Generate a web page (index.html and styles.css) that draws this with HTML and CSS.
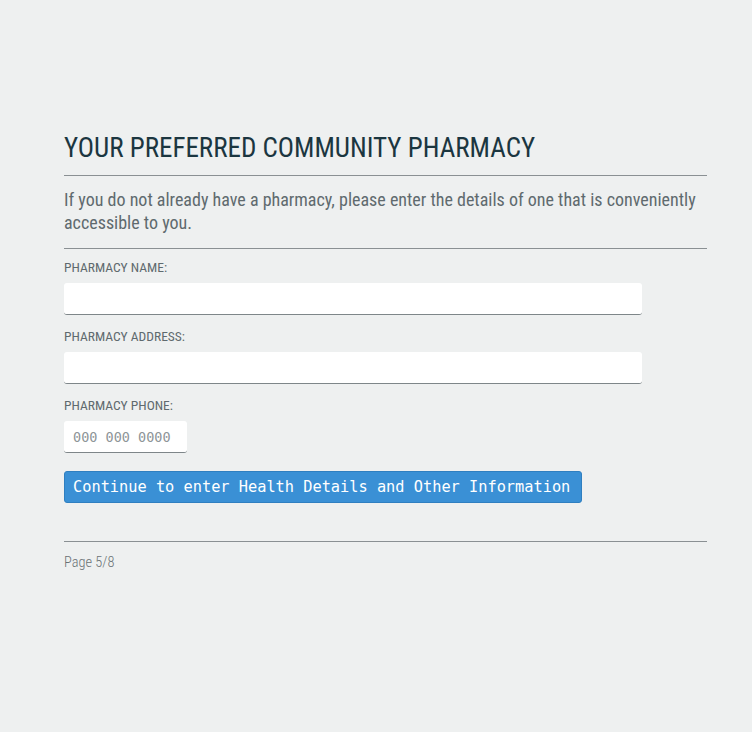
FILE: index.html
```html
<!DOCTYPE html>
<html>
<head>
<meta charset="utf-8">
<link rel="stylesheet" href="styles.css">
</head>
<body>
<main class="page">
  <h1 class="title">YOUR PREFERRED COMMUNITY PHARMACY</h1>
  <p class="intro">If you do not already have a pharmacy, please enter the details of one that is conveniently accessible to you.</p>
  <form class="form">
    <label class="field">
      <span class="label">PHARMACY NAME:</span>
      <input class="input wide" type="text">
    </label>
    <label class="field">
      <span class="label">PHARMACY ADDRESS:</span>
      <input class="input wide" type="text">
    </label>
    <label class="field">
      <span class="label">PHARMACY PHONE:</span>
      <input class="input phone" type="text" placeholder="000 000 0000">
    </label>
    <button class="btn" type="button">Continue to enter Health Details and Other Information</button>
  </form>
  <footer class="footer">Page 5/8</footer>
</main>
</body>
</html>
```

FILE: styles.css
```css
html, body {
  margin: 0;
  padding: 0;
  background: #eef0f0;
}
body {
  font-family: "Roboto Condensed", "Liberation Sans Narrow", Roboto, sans-serif;
  color: #5f6a6e;
}
.page {
  width: 643px;
  margin: 0 0 0 64px;
  padding-top: 130px;
}
.title {
  margin: 0;
  font-size: 27px;
  font-weight: 400;
  color: #1b3640;
  line-height: 36px;
  padding-bottom: 9px;
  border-bottom: 1px solid #8a9093;
}
.intro {
  margin: 0;
  padding: 12px 0 14px;
  font-size: 18px;
  line-height: 23px;
  color: #5f6a6e;
  border-bottom: 1px solid #8a9093;
}
.form {
  display: flex;
  flex-direction: column;
  align-items: flex-start;
  padding-top: 10px;
}
.field {
  display: flex;
  flex-direction: column;
  align-items: flex-start;
  gap: 8px;
  margin-bottom: 13px;
}
.label {
  font-size: 13.5px;
  line-height: 16px;
  color: #5f6a6e;
}
.input {
  box-sizing: border-box;
  height: 32px;
  border: none;
  border-bottom: 1px solid #7e8689;
  border-radius: 3px;
  background: #ffffff;
  padding: 0 9px;
  font-family: "DejaVu Sans Mono", monospace;
  font-size: 13.5px;
  outline: none;
}
.input.wide { width: 578px; }
.input.phone { width: 123px; }
.input::placeholder { color: #8e9598; }
.btn {
  margin-top: 5px;
  width: 518px;
  height: 32px;
  border: 1px solid #2f7fc0;
  border-radius: 3px;
  background: #3a90d5;
  color: #ffffff;
  font-family: "DejaVu Sans Mono", monospace;
  font-size: 15.3px;
  text-align: left;
  padding: 0 8px;
}
.footer {
  margin-top: 38px;
  border-top: 1px solid #8a9093;
  padding-top: 12px;
  font-size: 14.4px;
  font-weight: 300;
  color: #6a7275;
}
```
